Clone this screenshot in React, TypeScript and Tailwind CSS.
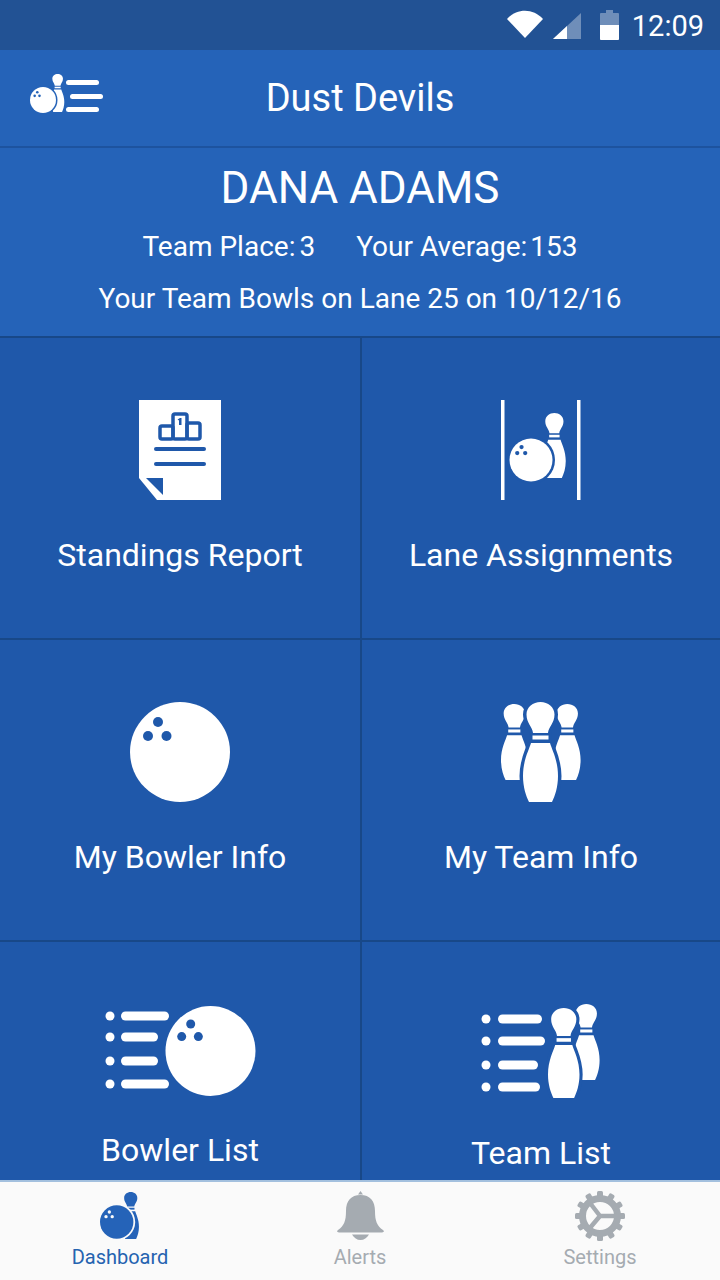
const PIN_HEAD = "M10 31C9.500 25 3.500 21 3.500 12.500C3.500 5 10 0 17.500 0C25 0 31.500 5 31.500 12.500C31.500 21 25.500 25 25 31Z"
const PIN_BODY = "M8 41H27C29 48 35 58 35 74C35 85 32 94 29 100H6C3 94 0 85 0 74C0 58 6 48 8 41Z"

const Pin = ({ x, y, s = 1, fill = "#fff", halo }: { x: number; y: number; s?: number; fill?: string; halo?: string }) => (
  <g transform={`translate(${x} ${y}) scale(${s})`}>
    {halo && (
      <g fill={halo} stroke={halo} strokeWidth="7" strokeLinejoin="round">
        <path d={PIN_HEAD} />
        <rect x="10" y="31" width="15" height="10" />
        <path d={PIN_BODY} />
      </g>
    )}
    <g fill={fill}>
      <path d={PIN_HEAD} />
      <rect x="9.500" y="33.500" width="16" height="4" />
      <path d={PIN_BODY} />
    </g>
  </g>
)

const Ball = ({ cx, cy, r, fill = "#fff", hole = "#1f58aa" }: { cx: number; cy: number; r: number; fill?: string; hole?: string }) => (
  <g>
    <circle cx={cx} cy={cy} r={r} fill={fill} />
    <circle cx={cx - r * 0.44} cy={cy - r * 0.6} r={r * 0.1} fill={hole} />
    <circle cx={cx - r * 0.64} cy={cy - r * 0.32} r={r * 0.1} fill={hole} />
    <circle cx={cx - r * 0.27} cy={cy - r * 0.32} r={r * 0.1} fill={hole} />
  </g>
)

const StandingsIcon = () => (
  <svg width="82" height="100" viewBox="0 0 82 100">
    <path d="M0 0H82V100H18L0 78Z" fill="#fff" />
    <path d="M7 78H24V95Z" fill="#1f58aa" />
    <g fill="none" stroke="#1f58aa" strokeWidth="3.500">
      <rect x="21" y="26" width="13" height="13" rx="2" />
      <rect x="34" y="14" width="14" height="25" rx="2" />
      <rect x="48" y="23" width="13" height="16" rx="2" />
    </g>
    <rect x="15" y="47" width="52" height="4" rx="2" fill="#1f58aa" />
    <rect x="15" y="62" width="52" height="4" rx="2" fill="#1f58aa" />
    <path d="M38.500 19.500L41 18H42.500V25H40V20.500Z" fill="#1f58aa" />
  </svg>
)

const LaneIcon = () => (
  <svg width="80" height="100" viewBox="0 0 80 100">
    <rect x="0" y="0" width="3.500" height="100" fill="#fff" />
    <rect x="76" y="0" width="3.500" height="100" fill="#fff" />
    <Pin x={42} y={13} s={0.65} />
    <circle cx="30" cy="60" r="24" fill="#1f58aa" />
    <Ball cx={30} cy={60} r={21.500} />
  </svg>
)

const TeamPinsIcon = () => (
  <svg width="80" height="100" viewBox="0 0 80 100">
    <Pin x={0} y={2} s={0.76} />
    <Pin x={53} y={2} s={0.76} />
    <Pin x={22} y={0} halo="#1f58aa" />
  </svg>
)

const BowlerListIcon = () => (
  <svg width="151" height="90" viewBox="0 0 151 90">
    <g fill="#fff">
      <circle cx="5" cy="10" r="4.500" />
      <circle cx="5" cy="31" r="4.500" />
      <circle cx="5" cy="55" r="4.500" />
      <circle cx="5" cy="78" r="4.500" />
      <rect x="16" y="5.500" width="48" height="9" rx="4.500" />
      <rect x="16" y="26.500" width="37" height="9" rx="4.500" />
      <rect x="16" y="50.500" width="37" height="9" rx="4.500" />
      <rect x="16" y="73.500" width="48" height="9" rx="4.500" />
    </g>
    <Ball cx={105.500} cy={45} r={45} />
  </svg>
)

const TeamListIcon = () => (
  <svg width="120" height="96" viewBox="0 0 120 96">
    <g fill="#fff">
      <circle cx="5" cy="16" r="4.500" />
      <circle cx="5" cy="38" r="4.500" />
      <circle cx="5" cy="62" r="4.500" />
      <circle cx="5" cy="84" r="4.500" />
      <rect x="17" y="11.500" width="44" height="9" rx="4.500" />
      <rect x="17" y="33.500" width="47" height="9" rx="4.500" />
      <rect x="17" y="57.500" width="40" height="9" rx="4.500" />
      <rect x="17" y="79.500" width="42" height="9" rx="4.500" />
    </g>
    <Pin x={92} y={1} s={0.76} />
    <Pin x={67} y={5} s={0.9} halo="#1f58aa" />
  </svg>
)

const MenuLogo = () => (
  <svg width="74" height="42" viewBox="0 0 74 42">
    <Pin x={21} y={0} s={0.38} />
    <circle cx="13" cy="26" r="14.500" fill="#2563b8" />
    <Ball cx={13} cy={26} r={13} hole="#2563b8" />
    <rect x="36" y="6" width="33" height="5" rx="2.500" fill="#fff" />
    <rect x="40" y="20" width="33" height="5" rx="2.500" fill="#fff" />
    <rect x="36" y="33" width="33" height="5" rx="2.500" fill="#fff" />
  </svg>
)

const Cell = ({ icon, label }: { icon: React.ReactNode; label: string }) => (
  <div className="flex h-[302px] flex-col items-center border-b-2 border-[#184888] pt-[62px]">
    <div className="flex h-[100px] items-center justify-center">{icon}</div>
    <div className="mt-[35px] text-[32px] leading-[40px] text-white">{label}</div>
  </div>
)

const BellIcon = () => (
  <svg width="47" height="50" viewBox="0 0 47 50" fill="#a5abb1">
    <path d="M23.500 0L26 3.500H21Z" />
    <path d="M23.500 4C33 4 38 10 38 20C38 30 40 35 46 39C47.500 40 47 41.500 45 41.500H2C0 41.500 -.5 40 1 39C7 35 9 30 9 20C9 10 14 4 23.500 4Z" />
    <path d="M15 43.500H32C30 47 27 49 23.500 49C20 49 17 47 15 43.500Z" />
  </svg>
)

const GearIcon = () => {
  const teeth = Array.from({ length: 12 }, (_, i) => i * 30)
  return (
    <svg width="50" height="52" viewBox="0 0 50 52" fill="none">
      {teeth.map((a) => (
        <rect key={a} x="22" y="1" width="6" height="7" rx="1.500" fill="#a5abb1" transform={`rotate(${a} 25 26)`} />
      ))}
      <circle cx="25" cy="26" r="17.500" stroke="#a5abb1" strokeWidth="7" />
      <path d="M25 26L15 13M25 26L42 26M25 26L14 39" stroke="#a5abb1" strokeWidth="4.500" />
    </svg>
  )
}

const DashboardIcon = () => (
  <svg width="42" height="50" viewBox="0 0 42 50">
    <Pin x={23.500} y={1} s={0.47} fill="#2563b8" />
    <circle cx="17.700" cy="31" r="18.500" fill="#fafafa" />
    <Ball cx={17.700} cy={31} r={16.700} fill="#2563b8" hole="#fafafa" />
  </svg>
)

const StatusIcons = () => (
  <div className="flex items-center">
    <svg width="36" height="28" viewBox="0 0 36 28" className="mb-[2px] mr-[10px]">
      <path d="M0 9C10 -2 26 -2 36 9L18 28Z" fill="#fff" />
    </svg>
    <svg width="28" height="26" viewBox="0 0 28 26" className="mr-[19px] mt-[2px]">
      <path d="M0 26L28 0V26Z" fill="#fff" fillOpacity="0.35" />
      <path d="M0 26L14 13V26Z" fill="#fff" />
    </svg>
    <svg width="19" height="30" viewBox="0 0 19 30" className="mr-[13px]">
      <path d="M1 3H6V0H13V3H18C18.500 3 19 3.500 19 4V15H0V4C0 3.500 .5 3 1 3Z" fill="#fff" fillOpacity="0.35" />
      <path d="M0 15H19V29C19 29.500 18.500 30 18 30H1C.5 30 0 29.500 0 29Z" fill="#fff" />
    </svg>
  </div>
)

export default function App() {
  return (
    <div
      className="flex h-[1280px] w-[720px] flex-col overflow-hidden bg-[#1f58aa] text-white"
      style={{ fontFamily: "Roboto, sans-serif" }}
    >
      <div className="flex h-[50px] shrink-0 items-center justify-end bg-[#225294] pr-[16px]">
        <StatusIcons />
        <span className="mt-[2px] text-[29px] leading-none">12:09</span>
      </div>

      <div className="relative flex h-[98px] shrink-0 items-center justify-center border-b-2 border-[#1d539f] bg-[#2563b8]">
        <div className="absolute left-[30px] top-[24px]">
          <MenuLogo />
        </div>
        <span className="text-[38px]">Dust Devils</span>
      </div>

      <div className="flex h-[190px] shrink-0 flex-col items-center border-b-2 border-[#184888] bg-[#2563b8] pt-[13px]">
        <div className="text-[44px] leading-[54px]">DANA ADAMS</div>
        <div className="mt-[14px] flex gap-[41px] text-[28px] leading-[36px]">
          <span>
            Team Place:<span className="ml-[4px]">3</span>
          </span>
          <span>
            Your Average:<span className="ml-[3px]">153</span>
          </span>
        </div>
        <div className="mt-[16px] text-[28px] leading-[36px]">Your Team Bowls on Lane 25 on 10/12/16</div>
      </div>

      <div className="grid min-h-0 flex-1 grid-cols-[362px_1fr] overflow-hidden">
        <div className="border-r-2 border-[#184888]">
          <Cell icon={<StandingsIcon />} label="Standings Report" />
          <Cell
            icon={
              <svg width="100" height="100" viewBox="0 0 100 100">
                <Ball cx={50} cy={50} r={50} />
              </svg>
            }
            label="My Bowler Info"
          />
          <div className="flex flex-col items-center pt-[64px]">
            <BowlerListIcon />
            <div className="mt-[34px] text-[32px] leading-[40px]">Bowler List</div>
          </div>
        </div>
        <div>
          <Cell icon={<LaneIcon />} label="Lane Assignments" />
          <Cell icon={<TeamPinsIcon />} label="My Team Info" />
          <div className="flex flex-col items-center pt-[61px]">
            <TeamListIcon />
            <div className="mt-[34px] text-[32px] leading-[40px]">Team List</div>
          </div>
        </div>
      </div>

      <div className="flex h-[100px] shrink-0 border-t-2 border-[#a3c0de] bg-[#fafafa] pt-[8px] text-[20px] leading-[26px]">
        <div className="flex flex-1 flex-col items-center text-[#2563b0]">
          <div className="flex h-[52px] items-center">
            <DashboardIcon />
          </div>
          <span className="mt-[2px]">Dashboard</span>
        </div>
        <div className="flex flex-1 flex-col items-center text-[#a5abb1]">
          <div className="flex h-[52px] items-center">
            <BellIcon />
          </div>
          <span className="mt-[2px]">Alerts</span>
        </div>
        <div className="flex flex-1 flex-col items-center text-[#a5abb1]">
          <div className="flex h-[52px] items-center">
            <GearIcon />
          </div>
          <span className="mt-[2px]">Settings</span>
        </div>
      </div>
    </div>
  )
}
